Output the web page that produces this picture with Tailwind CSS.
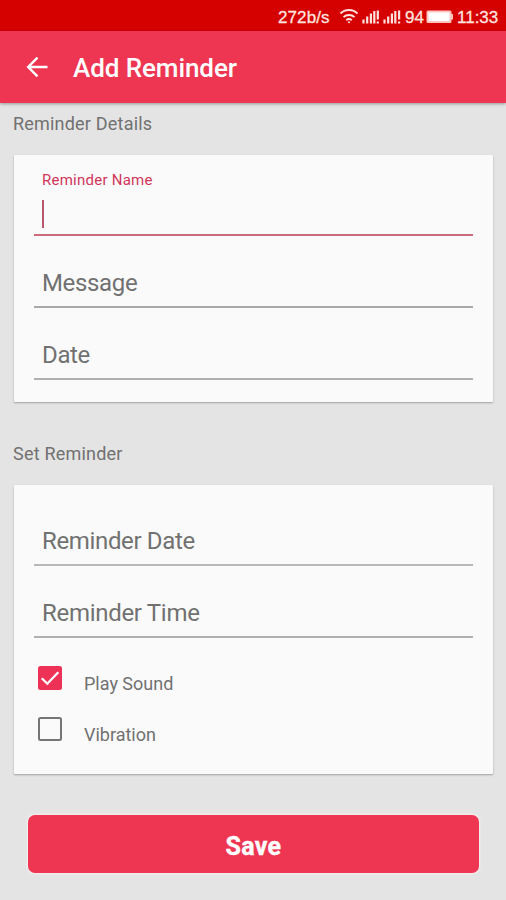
<!DOCTYPE html>
<html lang="en">
<head>
<meta charset="utf-8">
<title>Add Reminder</title>
<script src="https://cdn.jsdelivr.net/npm/@tailwindcss/browser@4"></script>
</head>
<body class="bg-[#e4e4e4]">
<div class="flex h-[900px] w-[506px] flex-col overflow-hidden bg-[#e4e4e4] font-['Roboto',sans-serif] text-[#717171]">
  <div class="flex h-[31px] shrink-0 items-center bg-[#d50000] pt-[3px] pl-[278px] font-['Liberation_Sans',sans-serif] text-[17px] leading-none text-[#ffe3df]">
    <span class="w-[61px] tracking-[0.100px] whitespace-nowrap [-webkit-text-stroke:0.3px_#ffe3df]">272b/s</span>
    <svg class="h-[18px] w-[66px] shrink-0" viewBox="0 0 66 18" fill="none" stroke="#ffe3df" stroke-width="1.9">
      <path d="M1.500 5.500C6 .8 14 .8 18.500 5.500M4.500 9.100C7.500 6.200 12.500 6.200 15.500 9.100M7.300 12.200C9 10.700 11 10.700 12.700 12.200"/>
      <circle cx="10" cy="14.300" r="1" fill="#ffe3df" stroke="none"/>
      <path d="M24.500 15.500v-4M28.200 15.500V8.500M31.900 15.500V5.500M35.300 15.500V3M38.800 2.500v9M38.800 13.500v2M45.500 15.500v-4M49.200 15.500V8.500M52.900 15.500V5.500M56.300 15.500V3M60.100 2.500v9M60.100 13.500v2" stroke-width="2.200"/>
    </svg>
    <span class="w-[21px] whitespace-nowrap [-webkit-text-stroke:0.3px_#ffe3df]">94</span>
    <svg class="h-[14px] w-[27px] shrink-0" viewBox="0 0 27 14" fill="#ffc4bf"><rect x="0.500" y="0.500" width="25" height="12.500" rx="1.500"/><rect x="2.500" y="2.500" width="21" height="8.500" fill="#fff"/><rect x="25" y="4" width="2" height="5.500"/></svg>
    <span class="pl-[4px] whitespace-nowrap [-webkit-text-stroke:0.3px_#ffe3df]">11:33</span>
  </div>
  <header class="relative flex h-[72px] shrink-0 items-center bg-[#ee3552] pl-[26px] text-white shadow-[0_1px_3px_rgba(0,0,0,0.35)]">
    <svg class="h-[22px] w-[22px]" viewBox="0 0 22 22" fill="none" stroke="currentColor" stroke-width="2.400"><path d="M21.500 11H2.500M11.500 1.700L2.200 11L11.500 20.300"/></svg>
    <h1 class="pt-[1px] pl-[25px] text-[26px] leading-none font-medium tracking-[-0.080px]">Add Reminder</h1>
  </header>
  <h2 class="mt-[11px] ml-[13px] h-[20px] text-[18px] leading-[20px] tracking-[0.200px]">Reminder Details</h2>
  <section class="ml-[14px] mt-[21px] flex h-[247px] w-[479px] shrink-0 flex-col rounded-[1px] bg-[#fafafa] px-[20px] shadow-[0_1px_2px_rgba(0,0,0,0.3)]">
    <div class="flex h-[81px] w-[439px] flex-col border-b-2 border-[#cb6b7b] pt-[16px] pl-[8px]">
      <span class="text-[15px] leading-[18px] tracking-[0.250px] text-[#d0365a]">Reminder Name</span>
      <span class="mt-[11px] h-[28px] w-[2px] bg-[#b8586e]"></span>
    </div>
    <div class="flex h-[72px] w-[439px] items-end border-b-2 border-[#a8a8a8] pb-[9px] pl-[8px] text-[24px] leading-[28px] tracking-[-0.350px]">Message</div>
    <div class="flex h-[72px] w-[439px] items-end border-b-2 border-[#b0b0b0] pb-[9px] pl-[8px] text-[24px] leading-[28px] tracking-[-0.350px]">Date</div>
  </section>
  <h2 class="mt-[42px] ml-[13px] h-[20px] text-[18px] leading-[20px] tracking-[0.200px]">Set Reminder</h2>
  <section class="ml-[14px] mt-[21px] flex h-[289px] w-[479px] shrink-0 flex-col rounded-[1px] bg-[#fafafa] px-[20px] shadow-[0_1px_2px_rgba(0,0,0,0.3)]">
    <div class="flex h-[81px] w-[439px] items-end border-b-2 border-[#b8b8b8] pb-[9px] pl-[8px] text-[24px] leading-[28px] tracking-[-0.350px]">Reminder Date</div>
    <div class="flex h-[72px] w-[439px] items-end border-b-2 border-[#b0b0b0] pb-[9px] pl-[8px] text-[24px] leading-[28px] tracking-[-0.300px]">Reminder Time</div>
    <label class="mt-[28px] flex h-[51px] pl-[4px] text-[18px]">
      <svg class="h-[24px] w-[24px]" viewBox="0 0 24 24"><rect width="24" height="24" rx="2.500" fill="#ee3157"/><path d="M3.800 12.200L9.300 17.700L20.300 6.200" fill="none" stroke="#fff" stroke-width="2.300"/></svg>
      <span class="pt-[8px] pl-[22px] leading-[20px]">Play Sound</span>
    </label>
    <label class="flex h-[40px] pl-[4px] text-[18px]">
      <span class="h-[24px] w-[24px] rounded-[2.500px] border-[2.500px] border-[#757575]"></span>
      <span class="pt-[8px] pl-[22px] leading-[20px]">Vibration</span>
    </label>
  </section>
  <button class="mt-[41px] ml-[28px] flex h-[58px] w-[451px] shrink-0 items-center justify-center rounded-[7px] bg-[#ee3552] pt-[4px] text-[25px] leading-none font-bold tracking-[0.300px] text-white shadow-[0_0_2px_1px_rgba(255,240,242,0.8)] [-webkit-text-stroke:0.4px_#fff]">Save</button>
</div>
</body>
</html>
